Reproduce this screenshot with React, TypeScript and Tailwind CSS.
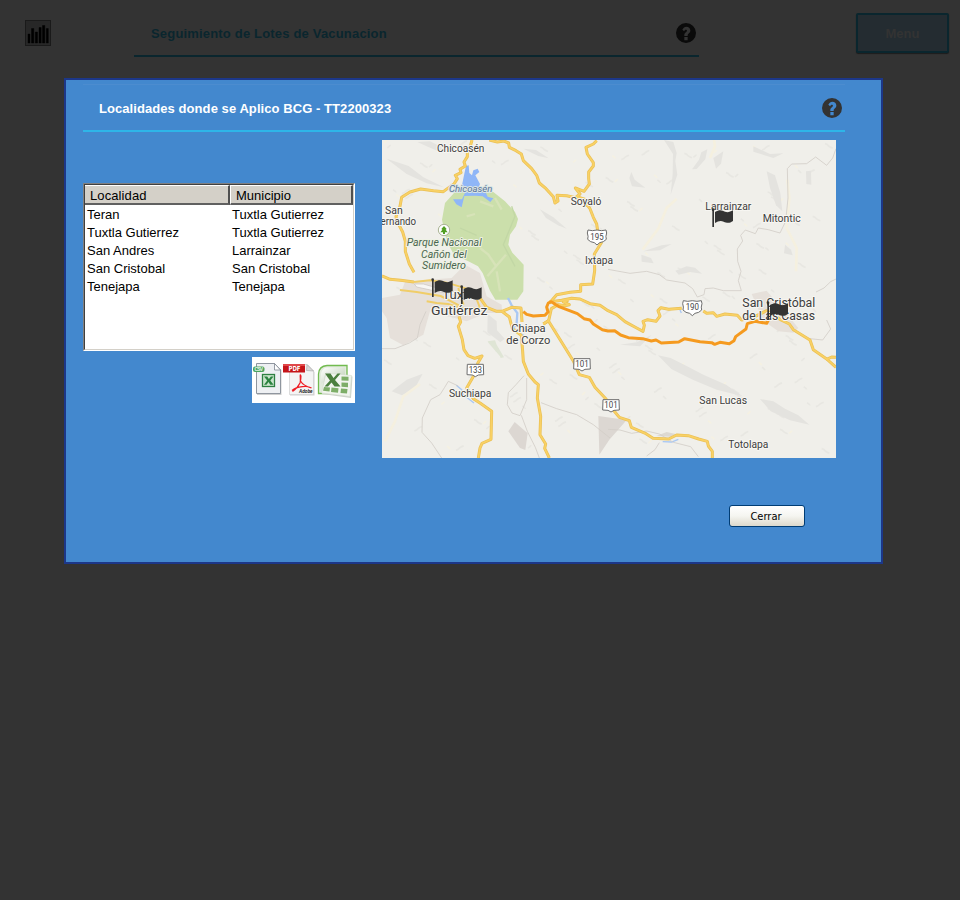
import React from "react";

const rows = [
  ["Teran", "Tuxtla Gutierrez"],
  ["Tuxtla Gutierrez", "Tuxtla Gutierrez"],
  ["San Andres", "Larrainzar"],
  ["San Cristobal", "San Cristobal"],
  ["Tenejapa", "Tenejapa"],
];

const roads = [
  "276,6 270,28 262,42 262,56 252,72 256,84 240,94 243,104 226,112 232,122 222,138 202,152 190,161 160,158 122,153 90,162 65,178 60,205 48,235 50,248 68,282 76,310 76,340 88,378 102,403",
  "6,414 30,424 62,427 102,432",
  "328,6 352,12 372,9 386,15 388,28 408,38 424,48 430,68 455,92 470,112 478,135 498,152 520,176 525,195 534,189 531,172 560,173 600,182 615,192 630,212 640,238 650,258 655,292 664,314 643,348 644,398 638,438 602,440 602,460 570,463 530,470 508,496",
  "650,8 640,18 618,28 622,48 640,74 640,84 626,102 626,122 628,138 612,160 586,150 600,168 590,176 616,184 622,206",
  "508,492 545,487 575,481 600,483 630,497 660,502 684,518 710,530 735,551 770,570 789,580 793,562 789,550 803,545 828,550 840,534 834,518 843,509 866,514 905,511",
  "970,519 980,526 1000,524 1010,535 1035,528 1072,532 1085,546 1120,538 1160,518 1200,544 1228,558 1240,575 1290,606 1300,635 1340,663 1368,688",
  "1338,665 1355,657 1368,658",
  "237,535 242,552 235,565 247,605 252,635 264,653 284,661 306,654 294,674 283,710 260,750 280,782 300,795 335,820 333,904 306,916 300,930 295,960",
  "300,480 320,508 350,520 366,520 395,508 423,510 425,535 426,552",
  "366,520 388,537 397,572 424,592 428,640 430,670 445,708 465,732 475,740 472,780 482,835 480,890 497,918 494,931 508,960",
  "490,558 505,548 580,669 598,710 628,718 645,748 678,783 700,816 718,838 748,848 754,868 798,887 819,901 866,903 890,891 925,893 956,903 982,910 985,924 997,940 997,960",
  "490,558 506,548 514,512 535,500 555,503 568,500 550,492 565,487",
];

const streets = [
  "60,456 110,462 182,474 237,502",
  "102,432 150,427 200,434 260,452 288,478 300,510",
  "140,490 170,495 204,498 250,512 300,510",
  "235,450 242,480 251,500",
  "1120,545 1165,548 1190,535 1180,520",
];

const borders = [
  "684,874 720,876 755,886 800,879 838,888 880,913 932,926 955,956",
  "684,394 750,406 800,400 838,410 860,426 915,435 938,452 952,477 972,470 975,452 1000,450 1030,458 1084,458 1075,428 1083,400 1073,370 1072,333 1088,309 1082,292 1096,276 1126,287 1135,270 1165,275 1200,285 1217,250 1224,180 1222,92 1235,78 1280,77 1307,57 1340,82 1358,60 1368,32",
  "1308,462 1332,450 1352,431 1368,423",
  "432,713 408,740 385,764 382,800 396,825 420,833 440,785 440,720",
  "424,832 442,880 466,928 478,960",
  "483,794 530,812 590,830 640,860 690,900",
  "6,632 45,632 88,615 112,600 120,560 138,520",
  "235,744 205,730 194,748 180,770 152,785 127,840 126,883 155,915 185,960",
  "1340,546 1352,573 1328,606 1290,602",
  "800,954 825,935 838,914",
];

const ridges = [
  "852,6 880,12 890,45 886,70 892,110 872,170 878,107 879,48",
  "1160,100 1185,112 1201,165 1207,220 1188,202 1170,150",
  "936,94 957,65 964,43 982,34 976,64 950,93",
  "886,398 920,385 945,389 966,407 930,402 896,410",
  "1140,783 1180,790 1215,812 1255,832 1288,860 1230,847 1172,820",
  "834,652 872,660 914,681 970,710 1038,740 1088,775 1010,755 940,726 875,694",
  "748,120 754,102 764,125 796,149 756,145",
  "784,350 813,360 821,376 785,371",
  "1215,320 1233,335 1238,352 1212,346",
  "1278,100 1293,98 1294,140 1279,138",
  "790,340 820,330 845,322 875,318 840,337",
  "20,62 86,84 130,118 192,148 140,136 80,108",
  "112,12 150,10 190,30 230,34 180,42 145,27",
  "323,528 350,550 351,577 374,602 361,613 322,583",
  "430,32 468,36 506,61 475,54",
  "480,214 520,238 560,272 534,262 498,240",
  "35,760 80,725 128,707 105,750 66,772",
  "720,620 770,613 815,591 780,625",
  "1000,60 1030,40 1023,77 1008,92",
  "1120,25 1170,48 1210,46 1180,60 1120,41",
];

// Short faint relief strokes scattered over the hills.
const relief = Array.from({ length: 210 }, (_, i) => {
  const x = 12 + ((i * 379 + (i % 7) * 53) % 1340);
  const y = 14 + ((i * 227 + (i % 11) * 37) % 930);
  const w = 10 + ((i * 13) % 26);
  const down = i % 3 === 0 ? -1 : 1;
  return {
    d: `M${x} ${y} q${w / 3} ${2 * down} ${w / 2} ${(w / 3) * down} q${w / 4} ${4 * down} ${w / 2} ${(w / 4) * down}`,
    warm: i % 4 === 0,
  };
});

type LabelProps = {
  x: number;
  y: number;
  w: number;
  size?: number;
  fill?: string;
  italic?: boolean;
  halo?: string;
  children: string;
};

function Label({ x, y, w, size = 31, fill = "#3d3d3d", italic, halo = "#f7f6f2", children }: LabelProps) {
  return (
    <text
      x={x}
      y={y}
      textLength={w}
      lengthAdjust="spacingAndGlyphs"
      fontSize={size}
      fontStyle={italic ? "italic" : "normal"}
      fill={fill}
      stroke={halo}
      strokeWidth={6}
      strokeLinejoin="round"
      paintOrder="stroke"
    >
      {children}
    </text>
  );
}

function Shield({ x, y, n, us }: { x: number; y: number; n: string; us?: boolean }) {
  return (
    <g transform={`translate(${x} ${y})`}>
      <path
        d={
          us
            ? "M-27 -20 Q-14 -16 0 -20 Q14 -16 27 -20 L29 -11 Q25 0 28 8 Q20 17 8 18 L0 25 L-8 18 Q-20 17 -28 8 Q-25 0 -29 -11Z"
            : "M-24 -17 H24 L25 14 L9 15 L0 20 L-9 15 L-25 14Z"
        }
        fill="#fff"
        stroke="#6e6e6e"
        strokeWidth={3}
      />
      <text y={9} textAnchor="middle" fontSize={25} textLength={40} lengthAdjust="spacingAndGlyphs" fill="#444">
        {n}
      </text>
    </g>
  );
}

function Flag({ x, y }: { x: number; y: number }) {
  return (
    <g transform={`translate(${x} ${y})`} fill="#333">
      <path d="M-1 3 a4 4 0 0 1 8 0 L6 8 V55 H1 V8Z" />
      <path d="M9 10 C23 1 31 5 39 9 C47 12 54 10 63 5 V37 C51 46 43 42 35 39 C25 35 18 38 9 43Z" />
    </g>
  );
}

function Map() {
  return (
    <svg viewBox="6 6 1362 954" className="block h-[318px] w-[454px] shrink-0" fontFamily="Roboto, sans-serif">
      <rect x="6" y="6" width="1362" height="954" fill="#f0efea" />
      <g fill="none" strokeWidth="5">
        {relief.map((r, i) => (
          <path key={i} d={r.d} stroke={r.warm ? "#f5f1e2" : "#e8e7e2"} />
        ))}
      </g>
      <g fill="#e4e3df">
        {ridges.map((p) => (
          <polygon key={p} points={p} />
        ))}
      </g>
      <g fill="none" stroke="#f5f0df" strokeWidth="8">
        <path d="M788 335 L835 272 L860 210 L890 182" />
        <path d="M1222 125 L1228 180 L1220 270 L1250 330 L1248 400" />
        <path d="M15 910 L45 850 L70 775 L120 738" />
        <path d="M990 60 L1005 25 L1002 6" />
      </g>
      <g fill="#e6e0da">
        <path d="M75 432 L145 425 L215 420 L255 380 L300 405 L320 475 L365 500 L366 525 L320 525 L260 550 L205 535 L150 520 L130 590 L70 622 L30 600 L20 540 L6 520 V480 L60 470Z" />
        <path d="M1115 468 L1160 458 L1230 540 L1255 570 L1240 584 L1195 580 L1150 548Z" />
      </g>
      <g fill="#dcd7d2">
        <polygon points="404,852 443,886 436,936 420,930 385,880" />
        <polygon points="655,834 740,846 688,905 658,950" />
      </g>
      <polygon points="323,610 325,614 360,655 362,660 372,658 350,620 345,607" fill="#dfe5d5" />
      <path
        d="M222 165 L246 148 L340 162 L375 190 L405 222 L414 243 L408 265 L390 290 L385 320 L397 344 L431 380 L430 460 L412 485 L346 485 L330 458 L308 405 L294 385 L265 370 L222 350 L200 310 L186 245 L195 195Z"
        fill="#cbdfab"
      />
      <path
        d="M300 190 L340 205 M260 235 L285 228 M345 180 L365 215 M300 330 L325 350 L348 384 M322 415 L378 350 M350 400 L360 460"
        stroke="#d7e3b8"
        strokeWidth="7"
        fill="none"
      />
      <path d="M395 205 L405 235 L370 320 L405 385 M240 270 L290 292" stroke="#c2d7a5" strokeWidth="4" fill="none" />
      <path
        d="M258 84 L266 82 L268 105 L276 112 L280 97 L293 92 L298 102 L286 112 L300 138 L296 148 L315 158 L323 176 L340 181 L331 192 L308 175 L285 173 L253 174 L245 208 L229 199 L219 184 L246 184 L260 154 L246 142 L252 112Z"
        fill="#8fb6f7"
      />
      <path d="M384 480 L395 502 L412 525 L410 555 L400 570 L415 585 L438 597" fill="none" stroke="#a9c8f4" strokeWidth="7" />
      <path d="M229 742 L245 755 L250 770 L282 795 M848 911 L875 912 L895 904 M900 516 L904 525" fill="none" stroke="#a9c8f4" strokeWidth="4" />
      <path d="M829 894 L860 882 L890 889 L870 896Z" fill="#ddd9d2" />
      <g fill="none" stroke="#d3cec8" strokeWidth="2.5" strokeLinejoin="round">
        {borders.map((p) => (
          <polyline key={p} points={p} />
        ))}
      </g>
      <path d="M103 438 L130 438 L172 450 L230 464 L226 471 L170 460 L110 447Z" fill="#f7f6f4" stroke="#c8c3be" strokeWidth="2" />
      <g fill="none" stroke="#f0cd68" strokeWidth="6" strokeLinejoin="round">
        {streets.map((p) => (
          <polyline key={p} points={p} />
        ))}
      </g>
      <g fill="none" stroke="#eac055" strokeWidth="9" strokeLinejoin="round">
        {roads.map((p) => (
          <polyline key={p} points={p} />
        ))}
      </g>
      <g fill="none" stroke="#f9d165" strokeWidth="5" strokeLinejoin="round">
        {roads.map((p) => (
          <polyline key={p} points={p} />
        ))}
      </g>
      <polyline
        points="430,521 440,529 460,534 495,532 504,522 500,507 505,495 514,491 535,505 592,527 612,542 630,546 640,558 667,575 684,579 704,578 722,591 745,599 788,602 814,609 828,606 844,615 896,612 914,602 960,611 995,614 1004,619 1020,613 1048,617 1062,608 1067,596 1098,573 1102,557 1125,550 1160,556 1168,540"
        fill="none"
        stroke="#f59a1f"
        strokeWidth="9"
        strokeLinejoin="round"
      />

      <Shield x={651} y={296} n="195" us />
      <Shield x={937} y={508} n="190" us />
      <Shield x={286} y={696} n="133" />
      <Shield x={606} y={679} n="101" />
      <Shield x={693} y={802} n="101" />

      <circle cx="192" cy="276" r="17" fill="#fff" stroke="#a9b393" strokeWidth="3" />
      <path d="M192 264 L200 273 L197 275 L203 283 H195 V288 H189 V283 H181 L187 275 L184 273Z" fill="#519f22" />

      <Label x={171} y={42} w={142}>Chicoasén</Label>
      <Label x={207} y={163} w={130} size={28} fill="#5b7499" halo="#dbe6e4" italic>Chicoasén</Label>
      <Label x={572} y={200} w={92}>Soyaló</Label>
      <Label x={615} y={377} w={84}>Ixtapa</Label>
      <Label x={15} y={228} w={53}>San</Label>
      <Label x={-14} y={262} w={122}>Fernando</Label>
      <g>
        <Label x={80} y={323} w={225} fill="#4b6650" halo="#eef2e4" italic>Parque Nacional</Label>
        <Label x={123} y={359} w={137} fill="#4b6650" halo="#eef2e4" italic>Cañón del</Label>
        <Label x={126} y={392} w={132} fill="#4b6650" halo="#eef2e4" italic>Sumidero</Label>
      </g>
      <Label x={187} y={484} w={107} size={38}>Tuxtla</Label>
      <Label x={153} y={531} w={169} size={37}>Gutiérrez</Label>
      <Label x={394} y={581} w={103} size={34}>Chiapa</Label>
      <Label x={379} y={617} w={132} size={34}>de Corzo</Label>
      <Label x={207} y={777} w={127}>Suchiapa</Label>
      <Label x={976} y={217} w={138}>Larrainzar</Label>
      <Label x={1148} y={251} w={114}>Mitontic</Label>
      <Label x={1087} y={506} w={219} size={36}>San Cristóbal</Label>
      <Label x={1087} y={545} w={218} size={36}>de Las Casas</Label>
      <Label x={958} y={797} w={143}>San Lucas</Label>
      <Label x={1045} y={931} w={120}>Totolapa</Label>

      <Flag x={155} y={422} />
      <Flag x={242} y={443} />
      <Flag x={996} y={212} />
      <Flag x={1161} y={491} />
    </svg>
  );
}

function HelpIcon({ className }: { className: string }) {
  return (
    <svg viewBox="0 0 60 60" className={className} fill="currentColor" fillRule="evenodd">
      <path d="M30 0a30 30 0 1 1 0 60a30 30 0 1 1 0-60ZM19 20C22 14 26 11 31 11C38 11 43 16 43 22.500C43 31 35 31 35 37V39H25V36C25 28 33 27 33 23C33 19 27 19 24.500 24.500ZM25 42H35V52H25Z" />
    </svg>
  );
}

function ChartIcon() {
  return (
    <svg viewBox="0 0 26 26" className="h-[26px] w-[26px]">
      <rect x=".5" y=".5" width="25" height="25" fill="#272727" stroke="#1a1a1a" />
      <path d="M3 14h2v9H3zM6.500 8.500h2.300V23H6.500zM10.300 12h2.200v11h-2.200zM14 7.500h2.200V23H14zM17.500 5.500h2.300V23h-2.300zM21.300 8.500h2V23h-2z" fill="#000" stroke="#000" strokeWidth=".4" />
    </svg>
  );
}

function CsvIcon() {
  return (
    <svg viewBox="0 0 30 36" className="h-[36px] w-[30px]">
      <path d="M4 2.500H22L28.500 8V33H4Z" fill="#cfcfcf" />
      <path d="M3.500 1.500H21.500L27.500 8V31.500H3.500Z" fill="#eef0f3" stroke="#8f969f" />
      <path d="M21.500 1.500V8H27.500Z" fill="#fff" stroke="#7e8590" strokeWidth=".8" />
      <rect x="9.500" y="12.500" width="12" height="12" fill="#c9e4cc" stroke="#2e7f42" strokeWidth="1.300" />
      <path d="M11 14.500h3.200l1.700 2.500 2-2.500h2.600l-3.200 4 3.300 4.200h-3.300l-1.800-2.600-2 2.600H11l3.200-4.200z" fill="#2b8340" />
      <rect x="0" y="4.500" width="11.500" height="5.500" rx="2" fill="#4aa35e" />
      <text x="1.500" y="9" fontSize="5" fontWeight="700" fill="#e7f6e9" textLength="8.500">CSV</text>
    </svg>
  );
}

function PdfIcon() {
  return (
    <svg viewBox="0 0 32 36" className="h-[36px] w-[32px]">
      <path d="M7 3H25L31.500 10V33.500H7Z" fill="#d2d2d2" />
      <path d="M6.500 2.500H24L30.500 9V32.500H6.500Z" fill="#f4f4f4" stroke="#d0d0d0" strokeWidth=".7" />
      <path d="M24 2.500L23.500 8.500L30.500 9Z" fill="#d9d9d9" stroke="#a5a5a5" strokeWidth=".6" />
      <path d="M17.300 12.500C16.800 15 18 18 17 21C15 25 12 28 9.500 29.500M17.300 12.500C19 14 17.500 17 17.500 19C19.500 22.500 23 24.500 28.500 26M28.500 26C25 23.500 14 24 9 28.500" fill="none" stroke="#ee1c24" strokeWidth="1.200" />
      <rect x="0" y="2" width="22" height="8.500" fill="#c51519" />
      <rect x="0" y="2" width="22" height="2" fill="#e0484a" />
      <text x="5.500" y="9" fontFamily="DejaVu Sans, sans-serif" fontSize="7" fontWeight="700" fill="#fff" textLength="12" lengthAdjust="spacingAndGlyphs">PDF</text>
      <text x="16" y="31" fontFamily="Liberation Sans, sans-serif" fontSize="6" fontStyle="italic" fontWeight="700" fill="#111" textLength="13.500" lengthAdjust="spacingAndGlyphs">Adobe</text>
    </svg>
  );
}

function ExcelIcon() {
  return (
    <svg viewBox="0 0 37 36" className="h-[36px] w-[37px]">
      <defs>
        <linearGradient id="sheet" x1="0" y1="0" x2="1" y2="1">
          <stop offset="0" stopColor="#fff" />
          <stop offset="1" stopColor="#b9cbb0" />
        </linearGradient>
      </defs>
      <path d="M10 3.500H30V31.500H1.500V12Q2 4 10 3.500Z" fill="#e2ebdd" stroke="#72bb50" strokeWidth="1.300" />
      <path d="M10 5.500H28V15Q15 12 4 22V12Q5 6 10 5.500Z" fill="url(#sheet)" />
      <path d="M8 13L35.500 14.500L34 36L5 32Z" fill="#cdd2ca" />
      <path d="M9 11L34.500 13.500L33 34.500L4.500 31Z" fill="#f1f5ee" stroke="#d4dccf" strokeWidth=".6" />
      <path d="M24.500 14.500l7 .2v4l-7-.2zM24.500 20.500l6.500.2v4.500l-6.500-.5zM24 26.500l6.500.5-.5 4.500-6.500-.5zM14.500 25.500l7 .8-.5 4.500-7-.8zM7 25l6 .5-.5 4-6.500-.7z" fill="#7dae68" />
      <path d="M8 11.500h5.500l3 4.500 4-4.500h3l-5.500 6.500 5.500 6.500h-6l-3-4L11 24.500H7.500l5.500-6z" fill="#4b7f3e" />
    </svg>
  );
}

export default function App() {
  return (
    <div className="relative h-[900px] w-[960px] overflow-hidden bg-[#333333] font-['Liberation_Sans',Arial,sans-serif]">
      <header className="flex items-start">
        <div className="ml-[25px] mt-[20px]">
          <ChartIcon />
        </div>
        <div className="ml-[83px] mt-[10px] flex h-[47px] w-[565px] items-center justify-between border-b-2 border-[#0a262e] pl-[17px] pr-[3px]">
          <h1 className="pt-[2px] text-[13px] font-bold tracking-[0.18px] text-[#0a262e]">Seguimiento de Lotes de Vacunacion</h1>
          <HelpIcon className="h-[20px] w-[20px] text-[#0a0a0a]" />
        </div>
        <button className="ml-[157px] mt-[13px] h-[40px] w-[93px] rounded-[2px] border-2 border-[#0a262e] bg-[#242c31] pt-px text-[13px] font-bold text-[#333333] shadow-[0_1px_1px_#1c1c1c]">
          Menu
        </button>
      </header>

      <section className="absolute left-[64px] top-[78px] h-[486px] w-[819px] border-2 border-[#1c3789] bg-[#4388ce] pl-[17px]">
        <div className="mt-[4px] flex h-[48px] w-[762px] items-center justify-between border-b-2 border-t border-b-[#2eb5e8] border-t-[#4c8ccf] pl-[16px] pr-[3px]">
          <h2 className="pt-[2px] text-[13px] font-bold tracking-[0.07px] text-white">Localidades donde se Aplico BCG - TT2200323</h2>
          <HelpIcon className="h-[20px] w-[20px] text-[#333333]" />
        </div>
        <div className="mt-[8px] flex gap-[27px]">
          <div className="flex w-[272px] flex-col items-end pt-[43px]">
            <div className="h-[168px] w-[272px] border border-b-white border-l-[#808080] border-r-white border-t-[#808080] bg-white">
              <div className="h-full border border-b-[#d4d0c8] border-l-[#404040] border-r-[#d4d0c8] border-t-[#404040] text-[13px] leading-[18px] text-black">
                <div className="flex h-[20px] bg-[#d4d0c8] leading-[20px]">
                  <div className="w-[145px] border-b-2 border-r-2 border-t border-b-[#606060] border-r-[#505050] border-t-white pl-[5px] tracking-[0.1px]">Localidad</div>
                  <div className="flex-1 border-b-2 border-l border-r-2 border-t border-b-[#606060] border-l-white border-r-[#505050] border-t-white pl-[5px]">Municipio</div>
                </div>
                <div className="pt-px">
                  {rows.map(([place, town], i) => (
                    <div key={i} className="flex h-[18px] pl-[2px]">
                      <div className="w-[145px]">{place}</div>
                      <div>{town}</div>
                    </div>
                  ))}
                </div>
              </div>
            </div>
            <div className="mt-[6px] flex h-[46px] w-[103px] items-start bg-white pl-[1px] pt-[5px]">
              <CsvIcon />
              <PdfIcon />
              <div className="ml-[2px]">
                <ExcelIcon />
              </div>
            </div>
          </div>
          <Map />
        </div>
        <button className="ml-[646px] mt-[47px] block h-[22px] w-[76px] rounded-[3px] border border-[#003c74] bg-gradient-to-b from-white via-[#f5f5f0] to-[#dcd8cc] pr-[2px] pt-px font-['DejaVu_Sans_Condensed','DejaVu_Sans',sans-serif] text-[11px] leading-[20px] text-black">
          Cerrar
        </button>
      </section>
    </div>
  );
}
